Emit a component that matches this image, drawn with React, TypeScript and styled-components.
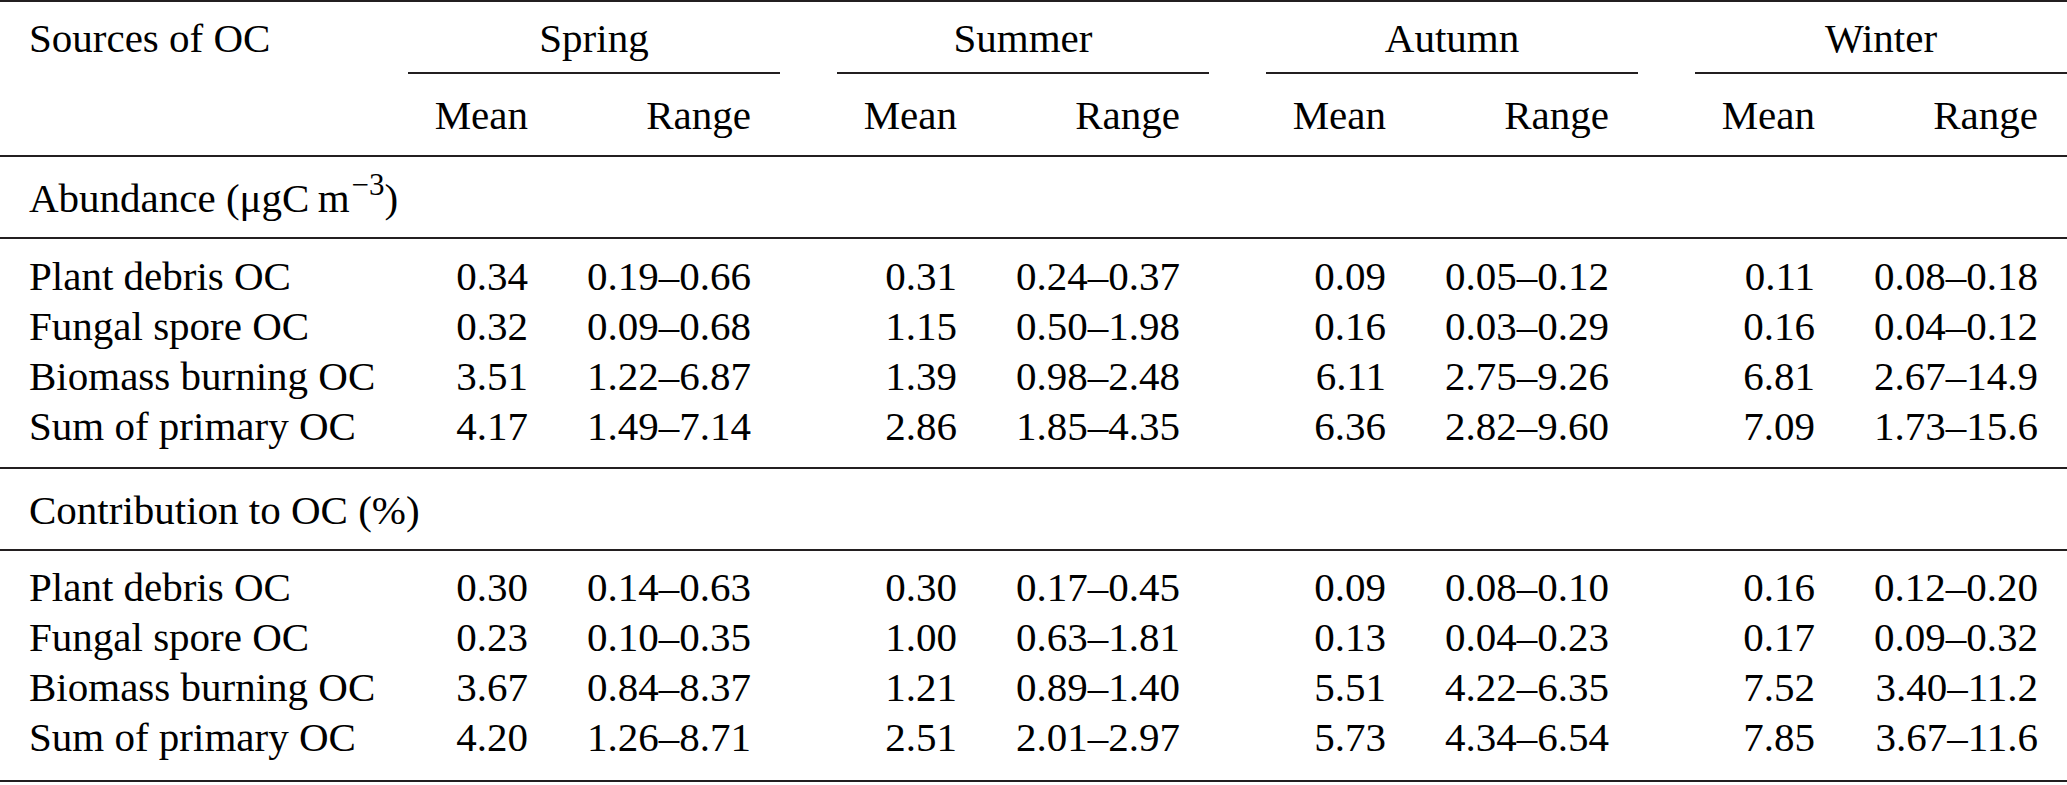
import React from "react";
import styled, { createGlobalStyle } from "styled-components";

const GlobalStyle = createGlobalStyle`
  html, body {
    margin: 0;
    padding: 0;
    background: #ffffff;
  }
`;

const RULE = "#231f20";
const SERIF = `"Liberation Serif", Tinos, "Times New Roman", Times, "DejaVu Serif", serif`;

const Table = styled.div`
  width: 2067px;
  border-top: 2px solid ${RULE};
  border-bottom: 2px solid ${RULE};
  font-family: ${SERIF};
  font-size: 41px;
  color: #000000;
`;

const Row = styled.div<{ $height: number; $rule?: boolean }>`
  display: flex;
  height: ${({ $height }) => $height}px;
  line-height: ${({ $height }) => $height}px;
  box-sizing: border-box;
  border-bottom: ${({ $rule }) => ($rule ? `2px solid ${RULE}` : "none")};
`;

const Label = styled.div`
  width: 408px;
  flex: none;
  padding-left: 29px;
  box-sizing: border-box;
  white-space: nowrap;
`;

const Season = styled.div`
  width: 372px;
  flex: none;
  text-align: center;
  box-sizing: border-box;
  border-bottom: 2px solid ${RULE};

  & + & {
    margin-left: 57px;
  }
`;

const Group = styled.div`
  width: 372px;
  flex: none;
  display: flex;

  & + & {
    margin-left: 57px;
  }
`;

const Mean = styled.div`
  width: 120px;
  text-align: right;
`;

const Range = styled.div`
  flex: 1;
  text-align: right;
  padding-right: 29px;
`;

const Body = styled.div<{ $top: number; $bottom: number; $rule?: boolean }>`
  padding-top: ${({ $top }) => $top}px;
  padding-bottom: ${({ $bottom }) => $bottom}px;
  border-bottom: ${({ $rule }) => ($rule ? `2px solid ${RULE}` : "none")};
`;

const Sup = styled.sup`
  font-size: 31px;
  line-height: 0;
  vertical-align: 17px;
  margin-left: 2px;
`;

const seasons = ["Spring", "Summer", "Autumn", "Winter"];

type DataRow = { name: string; values: [string, string][] };

const abundance: DataRow[] = [
  { name: "Plant debris OC", values: [["0.34", "0.19–0.66"], ["0.31", "0.24–0.37"], ["0.09", "0.05–0.12"], ["0.11", "0.08–0.18"]] },
  { name: "Fungal spore OC", values: [["0.32", "0.09–0.68"], ["1.15", "0.50–1.98"], ["0.16", "0.03–0.29"], ["0.16", "0.04–0.12"]] },
  { name: "Biomass burning OC", values: [["3.51", "1.22–6.87"], ["1.39", "0.98–2.48"], ["6.11", "2.75–9.26"], ["6.81", "2.67–14.9"]] },
  { name: "Sum of primary OC", values: [["4.17", "1.49–7.14"], ["2.86", "1.85–4.35"], ["6.36", "2.82–9.60"], ["7.09", "1.73–15.6"]] },
];

const contribution: DataRow[] = [
  { name: "Plant debris OC", values: [["0.30", "0.14–0.63"], ["0.30", "0.17–0.45"], ["0.09", "0.08–0.10"], ["0.16", "0.12–0.20"]] },
  { name: "Fungal spore OC", values: [["0.23", "0.10–0.35"], ["1.00", "0.63–1.81"], ["0.13", "0.04–0.23"], ["0.17", "0.09–0.32"]] },
  { name: "Biomass burning OC", values: [["3.67", "0.84–8.37"], ["1.21", "0.89–1.40"], ["5.51", "4.22–6.35"], ["7.52", "3.40–11.2"]] },
  { name: "Sum of primary OC", values: [["4.20", "1.26–8.71"], ["2.51", "2.01–2.97"], ["5.73", "4.34–6.54"], ["7.85", "3.67–11.6"]] },
];

const Rows: React.FC<{ rows: DataRow[] }> = ({ rows }) => (
  <>
    {rows.map((r) => (
      <Row key={r.name} $height={50}>
        <Label>{r.name}</Label>
        {r.values.map(([mean, range], i) => (
          <Group key={i}>
            <Mean>{mean}</Mean>
            <Range>{range}</Range>
          </Group>
        ))}
      </Row>
    ))}
  </>
);

export default function App() {
  return (
    <>
      <GlobalStyle />
      <Table>
        <Row $height={72}>
          <Label>Sources of OC</Label>
          {seasons.map((s) => (
            <Season key={s}>{s}</Season>
          ))}
        </Row>
        <Row $height={83} $rule>
          <Label />
          {seasons.map((s) => (
            <Group key={s}>
              <Mean>Mean</Mean>
              <Range>Range</Range>
            </Group>
          ))}
        </Row>
        <Row $height={82} $rule>
          <Label>
            Abundance (μgC&thinsp;m<Sup>−3</Sup>)
          </Label>
        </Row>
        <Body $top={12} $bottom={16} $rule>
          <Rows rows={abundance} />
        </Body>
        <Row $height={82} $rule>
          <Label>Contribution to OC (%)</Label>
        </Row>
        <Body $top={11} $bottom={18}>
          <Rows rows={contribution} />
        </Body>
      </Table>
    </>
  );
}
